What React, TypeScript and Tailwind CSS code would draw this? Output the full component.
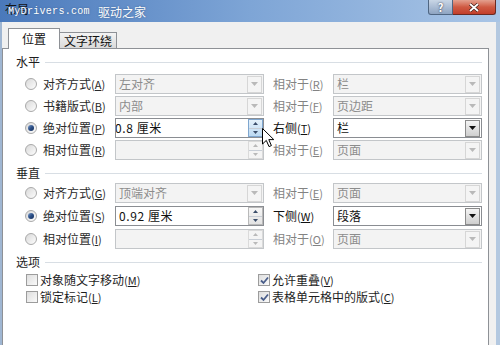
import React from 'react';

const Key = ({ k }: { k: string }) => (
    <span className="text-[11px]">(<span className="underline">{k}</span>)</span>
);

const Radio = ({ checked }: { checked?: boolean }) => (
    <span className="w-[12px] h-[12px] shrink-0 rounded-full border border-[#a9a9a9] bg-linear-to-br from-[#d9d9d9] to-[#fdfdfd] flex items-center justify-center">
        {checked && <span className="w-[6px] h-[6px] rounded-full bg-linear-to-br from-[#7a9ccc] via-[#2c4f86] to-[#142f5c]" />}
    </span>
);

const Check = ({ checked }: { checked?: boolean }) => (
    <span className="w-[12px] h-[12px] shrink-0 border border-[#9c9c9c] bg-linear-to-br from-[#dedede] to-[#fafafa] flex items-center justify-center">
        {checked && (
            <svg width="9" height="9" viewBox="0 0 9 9">
                <path d="M1 4.5 L3.5 7 L8 1.5" fill="none" stroke="#4a5e8a" strokeWidth="1.8" />
            </svg>
        )}
    </span>
);

const Tri = ({ up, color }: { up?: boolean; color: string }) => (
    <svg width="5" height="3" viewBox="0 0 5 3">
        <path d={up ? 'M0 3 L2.5 0 L5 3 Z' : 'M0 0 L5 0 L2.5 3 Z'} fill={color} />
    </svg>
);

const Combo = ({ text, enabled }: { text?: string; enabled?: boolean }) => (
    <div
        className={
            'w-[149px] h-[20px] flex items-center border ' +
            (enabled ? 'bg-white border-[#8a8d92]' : 'bg-[#f3f3f3] border-[#c3c6c9]')
        }
    >
        <span className={'flex-1 pl-[3px] ' + (enabled ? 'text-[#111]' : 'text-[#8c8c8c]')}>{text}</span>
        {enabled ? (
            <span className="w-[15px] h-[17px] mr-px border border-[#8b8b8b] bg-linear-to-b from-[#f4f4f4] to-[#cfcfcf] flex items-center justify-center">
                <svg width="7" height="4" viewBox="0 0 7 4">
                    <path d="M0 0 L7 0 L3.5 4 Z" fill="#111" />
                </svg>
            </span>
        ) : (
            <span className="w-[15px] h-[17px] mr-px border border-[#d6d6d6] bg-[#f4f4f4] flex items-center justify-center">
                <svg width="7" height="4" viewBox="0 0 7 4">
                    <path d="M0 0 L7 0 L3.5 4 Z" fill="#b9b9b9" />
                </svg>
            </span>
        )}
    </div>
);

const Spin = ({ text, enabled, hover, shift }: { text?: string; enabled?: boolean; hover?: boolean; shift?: boolean }) => (
    <div
        className={
            'w-[149px] h-[20px] flex items-center border overflow-hidden ' +
            (enabled ? 'bg-white border-[#8a8d92]' : 'bg-[#f3f3f3] border-[#c3c6c9]')
        }
    >
        <span className={'flex-1 whitespace-nowrap text-[#111] tracking-[0.6px] ' + (shift ? '-ml-[1px]' : 'pl-[3px]')}>{text}</span>
        <span
            className={
                'w-[15px] h-[18px] flex flex-col border ' +
                (hover
                    ? 'border-[#7fa6cf] bg-linear-to-b from-[#e5f1fb] to-[#bcd9f2]'
                    : enabled
                        ? 'border-[#b9b9b9] bg-linear-to-b from-[#f6f6f6] to-[#e3e3e3]'
                        : 'border-[#dadada] bg-[#f4f4f4]')
            }
        >
            <span className="flex-1 flex items-center justify-center border-b border-[#c8ced6]">
                <Tri up color={enabled ? '#3a4d6a' : '#b9b9b9'} />
            </span>
            <span className="flex-1 flex items-center justify-center">
                <Tri color={enabled ? '#3a4d6a' : '#b9b9b9'} />
            </span>
        </span>
    </div>
);

const Header = ({ title }: { title: string }) => (
    <div className="h-[14px] flex items-center pl-[13px] pr-[6px] text-[#1e1e1e]">
        <span>{title}</span>
        <span className="flex-1 h-px bg-[#d8dee4] ml-[5px]" />
    </div>
);

type RowProps = {
    checked?: boolean;
    label: string;
    k: string;
    left: React.ReactNode;
    label2: string;
    k2: string;
    enabled2?: boolean;
    right: React.ReactNode;
};

const Row = ({ checked, label, k, left, label2, k2, enabled2, right }: RowProps) => (
    <div className="h-[20px] flex items-center">
        <span className="w-[37px] pl-[22px] flex">
            <Radio checked={checked} />
        </span>
        <span className="w-[75px] pl-[3px] text-[#2a2a2a] whitespace-nowrap">
            {label}
            <Key k={k} />
        </span>
        {left}
        <span className={'w-[69px] pl-[9px] whitespace-nowrap ' + (enabled2 ? 'text-[#111]' : 'text-[#838383]')}>
            {label2}
            <Key k={k2} />
        </span>
        {right}
    </div>
);

const CheckRow = ({ checked, label, k }: { checked?: boolean; label: string; k: string }) => (
    <div className="h-[14px] flex items-center gap-[2px] text-[#1e1e1e] whitespace-nowrap">
        <Check checked={checked} />
        <span>
            {label}
            <Key k={k} />
        </span>
    </div>
);

const App = () => {
    return (
        <div className="w-[500px] h-[345px] overflow-hidden relative flex flex-col bg-[#a9c1dc] font-['Noto_Sans_CJK_SC','Noto_Sans',sans-serif] text-[12px] leading-[14px]">
            {/* title bar */}
            <div className="h-[22px] shrink-0 relative flex items-start bg-linear-to-r from-[#4a79bb] via-[#7ea5d6] to-[#a9c5e6]">
                <span className="ml-[5px] mt-[2px] text-[#151515]">布局</span>
                <div className="ml-auto mr-[4px] flex">
                    <span className="w-[25px] h-[15px] rounded-bl-[3px] border border-t-0 border-[#4f6682] bg-linear-to-b from-[#c9d6e6] to-[#8ea4c2] flex items-center justify-center text-[11px] font-bold text-white [text-shadow:0_0_2px_#223]">
                        ?
                    </span>
                    <span className="w-[43px] h-[15px] rounded-br-[3px] border border-t-0 border-l-0 border-[#6b2a22] bg-linear-to-b from-[#e3a08f] via-[#cf5a43] to-[#c23e2a] flex items-center justify-center">
                        <svg width="10" height="9" viewBox="0 0 10 9">
                            <path d="M1 1 L9 8 M9 1 L1 8" stroke="#3b1a16" strokeWidth="3.2" />
                            <path d="M1 1 L9 8 M9 1 L1 8" stroke="#fff" strokeWidth="1.8" />
                        </svg>
                    </span>
                </div>
                {/* watermark over the title */}
                <div className="absolute left-[8px] top-[5px] flex items-center gap-[8px] text-white [text-shadow:0_0_2px_#3d5f8f]">
                    <span className="font-['Liberation_Mono',monospace] text-[10px] tracking-[0.3px]">MyDrivers.com</span>
                    <span className="text-[12px]">驱动之家</span>
                </div>
            </div>

            {/* body */}
            <div className="flex-1 flex">
                <div className="w-[2px] bg-[#9fb6d2]" />
                <div className="flex-1 bg-[#f0f0f0] flex flex-col">
                    <div className="h-[26px] flex items-end pl-[6px]">
                        <div className="relative z-10 w-[52px] h-[21px] -mb-px bg-white border border-b-0 border-[#8e9196] flex items-center justify-center text-[#111]">
                            位置
                        </div>
                        <div className="w-[58px] h-[16px] -ml-px border border-b-0 border-[#8e9196] bg-linear-to-b from-[#f4f4f4] to-[#dadada] flex items-center justify-center text-[#111]">
                            文字环绕
                        </div>
                    </div>
                    <div className="w-[487px] flex-1 bg-white border border-b-0 border-[#8e9196] flex flex-col">
                        <div className="mt-[6px]">
                            <Header title="水平" />
                        </div>
                        <div className="mt-[5px] flex flex-col gap-[2px]">
                            <Row label="对齐方式" k="A" left={<Combo text="左对齐" />} label2="相对于" k2="R" right={<Combo text="栏" />} />
                            <Row label="书籍版式" k="B" left={<Combo text="内部" />} label2="相对于" k2="F" right={<Combo text="页边距" />} />
                            <Row
                                checked
                                label="绝对位置"
                                k="P"
                                left={<Spin text="0.8 厘米" enabled hover shift />}
                                label2="右侧"
                                k2="T"
                                enabled2
                                right={<Combo text="栏" enabled />}
                            />
                            <Row label="相对位置" k="R" left={<Spin />} label2="相对于" k2="E" right={<Combo text="页面" />} />
                        </div>
                        <div className="mt-[6px]">
                            <Header title="垂直" />
                        </div>
                        <div className="mt-[3px] flex flex-col gap-[3px]">
                            <Row label="对齐方式" k="G" left={<Combo text="顶端对齐" />} label2="相对于" k2="E" right={<Combo text="页面" />} />
                            <Row
                                checked
                                label="绝对位置"
                                k="S"
                                left={<Spin text="0.92 厘米" enabled />}
                                label2="下侧"
                                k2="W"
                                enabled2
                                right={<Combo text="段落" enabled />}
                            />
                            <Row label="相对位置" k="I" left={<Spin />} label2="相对于" k2="O" right={<Combo text="页面" />} />
                        </div>
                        <div className="mt-[6px]">
                            <Header title="选项" />
                        </div>
                        <div className="mt-[4px] flex">
                            <div className="w-[255px] pl-[23px] flex flex-col gap-[3px]">
                                <CheckRow label="对象随文字移动" k="M" />
                                <CheckRow label="锁定标记" k="L" />
                            </div>
                            <div className="flex flex-col gap-[3px]">
                                <CheckRow checked label="允许重叠" k="V" />
                                <CheckRow checked label="表格单元格中的版式" k="C" />
                            </div>
                        </div>
                    </div>
                </div>
                <div className="w-[4px] bg-[#b3c8e0]" />
            </div>

            {/* mouse pointer over the spinner */}
            <svg className="absolute left-[262px] top-[128px]" width="13" height="20" viewBox="0 0 13 20">
                <path d="M0.5 0.5 L0.5 16 L4.3 12.4 L7 18.6 L9.4 17.6 L6.8 11.6 L11.8 11.6 Z" fill="#fff" stroke="#000" strokeWidth="1" />
            </svg>
        </div>
    );
};

export default App;
